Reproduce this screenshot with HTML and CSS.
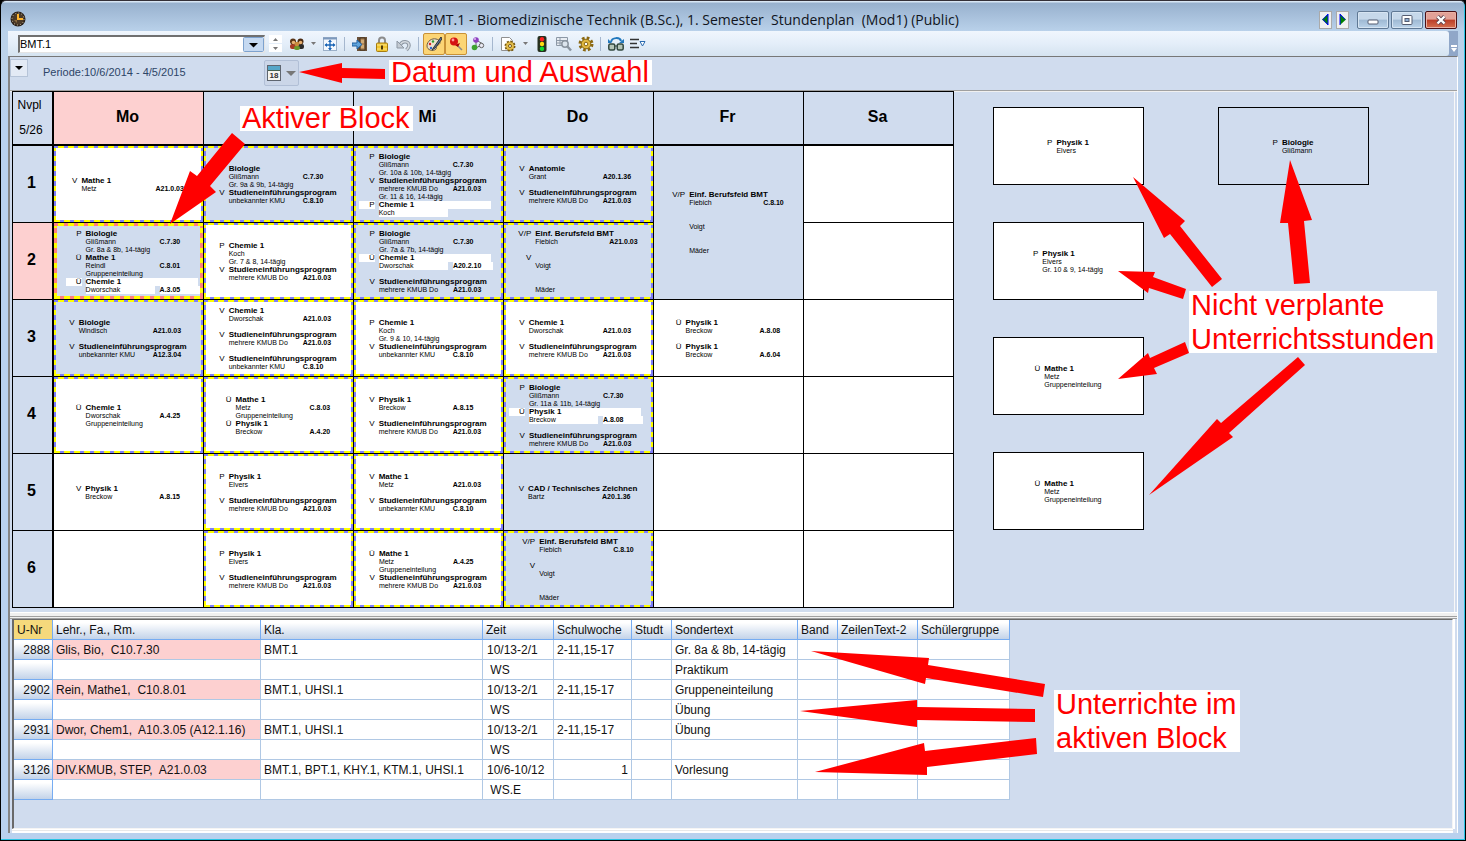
FILE: index.html
```html
<!DOCTYPE html>
<html lang="de">
<head>
<meta charset="utf-8">
<title>BMT.1 - Stundenplan</title>
<link rel="stylesheet" href="styles.css">
</head>
<body>
<div class="window">
  <header class="titlebar">
    <svg class="app-icon" viewBox="0 0 16 16" aria-hidden="true"><circle cx="8" cy="8" r="7.5" fill="#2b2119"/><circle cx="8" cy="8" r="6" fill="#4b3a28" stroke="#d8c8a8" stroke-dasharray="1 2.1"/><path d="M8 3v5h5" stroke="#ffb52e" stroke-width="2" fill="none"/><path d="M4 9h3v3z" fill="#8b6b3e"/></svg>
    <h1 class="title">BMT.1 - Biomedizinische Technik (B.Sc.), 1. Semester&nbsp; Stundenplan&nbsp; (Mod1) (Public)</h1>
    <div class="window-buttons">
      <button class="step" aria-label="Zurück"><svg viewBox="0 0 7 11"><path d="M6 0v11L0 5.500z" fill="#008000"/><path d="M6 0v11M6 0L1 5.500l5 5.500" stroke="#00f" fill="none"/></svg></button>
      <button class="step" aria-label="Vor"><svg viewBox="0 0 7 11"><path d="M1 0v11l6-5.500z" fill="#008000"/><path d="M1 11V0l5 5.500" stroke="#00f" fill="none"/></svg></button>
      <button class="caption first" aria-label="Minimieren"><svg viewBox="0 0 12 10"><rect x="1" y="5" width="10" height="4" rx="1" fill="#fff" stroke="#555c70"/></svg></button>
      <button class="caption" aria-label="Maximieren"><svg viewBox="0 0 12 10"><rect x="1" y=".5" width="10" height="9" rx="1" fill="#fff" stroke="#555c70"/><rect x="4" y="3.500" width="4" height="3" fill="#8fb0d6" stroke="#555c70"/></svg></button>
      <button class="caption close" aria-label="Schließen"><svg viewBox="0 0 12 10"><path d="M2.500 1.500l7 7M9.500 1.500l-7 7" stroke="#5b4450" stroke-width="4"/><path d="M2.500 1.500l7 7M9.500 1.500l-7 7" stroke="#fff" stroke-width="2.400"/></svg></button>
    </div>
  </header>

  <div class="toolbar">
    <div class="tools">
      <div class="combo">
        <select aria-label="Klasse"><option>BMT.1</option></select>
        <svg class="combo-arrow" viewBox="0 0 21 15" aria-hidden="true"><rect x=".5" y=".5" width="20" height="14" rx="1" fill="#c5d9f1" stroke="#7da2ce"/><path d="M6 6h9l-4.500 4.500z"/></svg>
      </div>
      <div class="spinner">
        <button aria-label="Vorherige"><svg viewBox="0 0 5 3"><path d="M0 3h5L2.500 0z" fill="#777"/></svg></button>
        <button aria-label="Nächste"><svg viewBox="0 0 5 3"><path d="M0 0h5L2.500 3z" fill="#777"/></svg></button>
      </div>
      <button class="tool people" aria-label="Klassen"><svg viewBox="0 0 16 16"><rect x="1" y="8" width="6" height="5" rx="2" fill="#a83a25"/><rect x="9" y="8" width="6" height="5" rx="2" fill="#2b2b2b"/><rect x="5" y="10" width="6" height="4" rx="2" fill="#6a9a2d"/><circle cx="4" cy="5.500" r="3" fill="#5a3516"/><circle cx="4.500" cy="6.500" r="1.800" fill="#e8b070"/><circle cx="11.500" cy="5.500" r="3" fill="#4a2a12"/><circle cx="11.500" cy="6.500" r="1.800" fill="#e8b070"/><circle cx="8" cy="8" r="2.300" fill="#c88a3c"/></svg></button>
      <button class="tool drop" aria-label="Mehr"><svg viewBox="0 0 5 3"><path d="M0 0h5L2.500 3z" fill="#777"/></svg></button>
      <button class="tool" aria-label="Anpassen"><svg viewBox="0 0 16 16"><rect x="1.500" y="1.500" width="13" height="13" fill="#f4f8fd" stroke="#9bb0c8"/><path d="M1 2.500h14" stroke="#7c99bd" stroke-width="2"/><path d="M8 4.500v9M3.500 9h9" stroke="#1763b5" stroke-width="1.300"/><path d="M8 3.500l2 2.500H6zM8 14.500L6 12h4zM2.500 9L5 7v4zM13.500 9L11 7v4z" fill="#1763b5"/></svg></button>
      <span class="sep"></span>
      <button class="tool" aria-label="Öffnen"><svg viewBox="0 0 16 16"><path d="M5 1h10v14H5z" fill="#6a5139"/><path d="M8 2h5v12H8z" fill="#b0895b" stroke="#44321f"/><path d="M9 4h3v3H9zM9 9h3v3H9z" fill="#d0ab78"/><path d="M0 7h5V4l5 4.500L5 13v-3H0z" fill="#5fa4dc" stroke="#1e5f9f"/></svg></button>
      <button class="tool" aria-label="Sperren"><svg viewBox="0 0 16 16"><path d="M5 8V4.500a3 3 0 0 1 6 0V8" fill="none" stroke="#8c8c8c" stroke-width="2"/><rect x="2.500" y="7" width="11" height="8.500" rx="1" fill="#f2c730" stroke="#a67c10"/><path d="M3 9h10M3 13h10" stroke="#fbe58b"/><path d="M8 9.500v4" stroke="#4d3a08" stroke-width="2"/></svg></button>
      <button class="tool" aria-label="Rückgängig"><svg viewBox="0 0 16 16"><path d="M4 9.500C6 4 13 5 13 9.500c0 2-1 3-2.500 4.500" fill="none" stroke="#8d97a3" stroke-width="3.600"/><path d="M4 9.500C6 4 13 5 13 9.500c0 2-1 3-2.500 4.500" fill="none" stroke="#d3d9df" stroke-width="1.600"/><path d="M1 5v7h7z" fill="#c4cbd3" stroke="#8d97a3"/></svg></button>
      <span class="sep"></span>
      <button class="tool active" aria-label="Farben"><svg viewBox="0 0 16 16"><path d="M1 10C1 5 6 2 10 3c5 1 5 5 2 6-2 1-1 2-2 4-3 3-9 1-9-3z" fill="#eee2cb" stroke="#6b5d45"/><circle cx="4" cy="8" r="1.200" fill="#d22"/><circle cx="7" cy="5.500" r="1.200" fill="#2b9a33"/><circle cx="5" cy="12" r="1.200" fill="#3366cc"/><path d="M15 1L8 11l-2 3 3-2 7-9z" fill="#5577a8" stroke="#333"/></svg></button>
      <button class="tool active" aria-label="Fixieren"><svg viewBox="0 0 16 16"><path d="M8 8l6 6" stroke="#888" stroke-width="1.500"/><path d="M7 9l3 2 2-4z" fill="#a00"/><circle cx="6" cy="5.500" r="4" fill="#d51212"/><circle cx="5" cy="4" r="1.400" fill="#ff9c9c"/></svg></button>
      <button class="tool" aria-label="Kopplung"><svg viewBox="0 0 16 16"><path d="M6 4v8M6 12l7-4M6 4l7 4" stroke="#666"/><circle cx="6" cy="4" r="2.800" fill="#8d3fc0"/><circle cx="5" cy="3" r="1" fill="#e0bdf2"/><circle cx="4.500" cy="11.500" r="2.800" fill="#3fa331"/><circle cx="11.500" cy="9.500" r="2.200" fill="#e9e9f4" stroke="#666"/></svg></button>
      <span class="sep"></span>
      <button class="tool" aria-label="Einstellungen"><svg viewBox="0 0 16 16"><path d="M1.500 1.500h8l3 3v10h-11z" fill="#fff" stroke="#909090"/><circle cx="10" cy="10" r="4.500" fill="#c99a22" stroke="#76580e" stroke-width="2" stroke-dasharray="2 1.500"/><circle cx="10" cy="10" r="3.800" fill="#e3bd4b"/><circle cx="10" cy="10" r="1.500" fill="#fff" stroke="#76580e"/></svg></button>
      <button class="tool drop" aria-label="Mehr"><svg viewBox="0 0 5 3"><path d="M0 0h5L2.500 3z" fill="#777"/></svg></button>
      <button class="tool" aria-label="Ampel"><svg viewBox="0 0 16 16"><rect x="3.500" y="0" width="9" height="16" rx="2" fill="#26301f"/><circle cx="8" cy="3.300" r="2.200" fill="#f22"/><circle cx="8" cy="8" r="2.200" fill="#fd1"/><circle cx="8" cy="12.700" r="2.200" fill="#1d3"/></svg></button>
      <button class="tool" aria-label="Suchen"><svg viewBox="0 0 16 16"><path d="M.5 1.500h11v8H.5zM.5 4.500h11M.5 7h11M4 2v7" fill="#e8edf3" stroke="#8c98a6"/><circle cx="9" cy="8" r="3.200" fill="#dce5ee" stroke="#8a949f" stroke-width="1.500"/><path d="M11 10l4 4.500" stroke="#8a949f" stroke-width="2.500"/></svg></button>
      <button class="tool" aria-label="Optionen"><svg viewBox="0 0 16 16"><circle cx="8" cy="8" r="6" fill="none" stroke="#8b6811" stroke-width="3" stroke-dasharray="2.600 2.110"/><circle cx="8" cy="8" r="4.800" fill="#e2b941" stroke="#8b6811"/><circle cx="8" cy="8" r="1.800" fill="#fff" stroke="#8b6811"/></svg></button>
      <span class="sep"></span>
      <button class="tool" aria-label="Vergleichen"><svg viewBox="0 0 16 16"><rect x=".8" y="8" width="6" height="6" rx="1.500" fill="#b5c5b8" stroke="#32483f" stroke-width="1.500"/><rect x="9.200" y="8" width="6" height="6" rx="1.500" fill="#b5c5b8" stroke="#32483f" stroke-width="1.500"/><path d="M6 10h4" stroke="#32483f"/><path d="M3 6c1-5 9-5 10-1" fill="none" stroke="#2178bd" stroke-width="2"/><path d="M0 3v4h4zM16 3v4h-5z" fill="#2178bd"/></svg></button>
      <button class="tool" aria-label="Liste"><svg viewBox="0 0 16 16"><path d="M0 3.500h9M0 7.500h7M0 11.500h9" stroke="#333" stroke-width="1.500"/><path d="M10 5.500h5L12.500 10z" fill="#fff" stroke="#2a6bb0"/></svg></button>
    </div>
    <button class="overflow" aria-label="Weitere Symbole"><svg viewBox="0 0 6 7"><path d="M0 1h6" stroke="#fff" stroke-width="2"/><path d="M0 3h6L3 7z" fill="#fff"/></svg></button>
  </div>

  <main class="content">
    <div class="period">
      <button class="expand" aria-label="Aufklappen"><svg viewBox="0 0 8 4"><path d="M0 0h8L4 4z"/></svg></button>
      <span class="period-text">Periode:10/6/2014 - 4/5/2015</span>
      <button class="date" aria-label="Datum"><svg class="calendar" viewBox="0 0 14 16"><rect x=".5" y=".5" width="13" height="15" fill="#f5f5f0" stroke="#5f6670"/><path d="M1 1h12v4H1z" fill="#56a6c8"/><path d="M1 5.500h12" stroke="#46604f"/><text x="7" y="13" text-anchor="middle" font-size="8" font-weight="bold" fill="#333">18</text></svg><svg class="date-arrow" viewBox="0 0 10 5"><path d="M0 0h10L5 5z" fill="#777"/></svg></button>
    </div>

    <section class="plan">
      <table class="timetable">
        <colgroup><col class="hours"><col span="6" class="day"></colgroup>
        <thead>
          <tr><th class="corner"><span>Nvpl</span><span>5/26</span></th><th class="current">Mo</th><th aria-label="Dienstag"></th><th>Mi</th><th>Do</th><th>Fr</th><th>Sa</th></tr>
        </thead>
        <tbody>
          <tr>
            <th>1</th>
            <td><div class="cell marked"><div class="block"><span class="type">V</span><b class="subject">Mathe 1</b><span class="teacher">Metz</span><b class="room">A21.0.03</b></div></div></td>
            <td><div class="cell marked blue"><div class="block"><span class="type">P</span><b class="subject">Biologie</b><span class="teacher">Glißmann</span><b class="room">C.7.30</b><span class="note">Gr. 9a &amp; 9b, 14-tägig</span><span class="type">V</span><b class="subject">Studieneinführungsprogram</b><span class="teacher">unbekannter KMU</span><b class="room">C.8.10</b></div></div></td>
            <td><div class="cell marked blue"><div class="block"><span class="type">P</span><b class="subject">Biologie</b><span class="teacher">Glißmann</span><b class="room">C.7.30</b><span class="note">Gr. 10a &amp; 10b, 14-tägig</span><span class="type">V</span><b class="subject">Studieneinführungsprogram</b><span class="teacher">mehrere KMUB Do</span><b class="room">A21.0.03</b><span class="note">Gr. 11 &amp; 16, 14-tägig</span><span class="type hl">P</span><b class="subject hl">Chemie 1</b><span class="teacher hl">Koch</span></div></div></td>
            <td><div class="cell marked blue"><div class="block"><span class="type">V</span><b class="subject">Anatomie</b><span class="teacher">Grant</span><b class="room">A20.1.36</b><span class="blank"></span><span class="type">V</span><b class="subject">Studieneinführungsprogram</b><span class="teacher">mehrere KMUB Do</span><b class="room">A21.0.03</b></div></div></td>
            <td rowspan="2"><div class="cell blue"><div class="block"><span class="type">V/P</span><b class="subject">Einf. Berufsfeld BMT</b><span class="teacher">Fiebich</span><b class="room">C.8.10</b><span class="blank"></span><span class="blank"></span><span class="teacher">Voigt</span><span class="blank"></span><span class="blank"></span><span class="teacher">Mäder</span></div></div></td>
            <td></td>
          </tr>
          <tr>
            <th class="current">2</th>
            <td><div class="cell marked selected blue"><div class="block"><span class="type">P</span><b class="subject">Biologie</b><span class="teacher">Glißmann</span><b class="room">C.7.30</b><span class="note">Gr. 8a &amp; 8b, 14-tägig</span><span class="type">Ü</span><b class="subject">Mathe 1</b><span class="teacher">Reindl</span><b class="room">C.8.01</b><span class="note">Gruppeneinteilung</span><span class="type hl">Ü</span><b class="subject hl">Chemie 1</b><span class="teacher hl">Dworschak</span><b class="room hl">A.3.05</b></div></div></td>
            <td><div class="cell marked"><div class="block"><span class="type">P</span><b class="subject">Chemie 1</b><span class="teacher">Koch</span><span class="note">Gr. 7 &amp; 8, 14-tägig</span><span class="type">V</span><b class="subject">Studieneinführungsprogram</b><span class="teacher">mehrere KMUB Do</span><b class="room">A21.0.03</b></div></div></td>
            <td><div class="cell marked blue"><div class="block"><span class="type">P</span><b class="subject">Biologie</b><span class="teacher">Glißmann</span><b class="room">C.7.30</b><span class="note">Gr. 7a &amp; 7b, 14-tägig</span><span class="type hl">Ü</span><b class="subject hl">Chemie 1</b><span class="teacher hl">Dworschak</span><b class="room hl">A20.2.10</b><span class="blank"></span><span class="type">V</span><b class="subject">Studieneinführungsprogram</b><span class="teacher">mehrere KMUB Do</span><b class="room">A21.0.03</b></div></div></td>
            <td><div class="cell marked blue"><div class="block"><span class="type">V/P</span><b class="subject">Einf. Berufsfeld BMT</b><span class="teacher">Fiebich</span><b class="room">A21.0.03</b><span class="blank"></span><span class="type">V</span><b class="subject"></b><span class="teacher">Voigt</span><span class="blank"></span><span class="blank"></span><span class="teacher">Mäder</span></div></div></td>
            <td></td>
          </tr>
          <tr>
            <th>3</th>
            <td><div class="cell marked blue"><div class="block"><span class="type">V</span><b class="subject">Biologie</b><span class="teacher">Windisch</span><b class="room">A21.0.03</b><span class="blank"></span><span class="type">V</span><b class="subject">Studieneinführungsprogram</b><span class="teacher">unbekannter KMU</span><b class="room">A12.3.04</b></div></div></td>
            <td><div class="cell marked"><div class="block"><span class="type">V</span><b class="subject">Chemie 1</b><span class="teacher">Dworschak</span><b class="room">A21.0.03</b><span class="blank"></span><span class="type">V</span><b class="subject">Studieneinführungsprogram</b><span class="teacher">mehrere KMUB Do</span><b class="room">A21.0.03</b><span class="blank"></span><span class="type">V</span><b class="subject">Studieneinführungsprogram</b><span class="teacher">unbekannter KMU</span><b class="room">C.8.10</b></div></div></td>
            <td><div class="cell marked"><div class="block"><span class="type">P</span><b class="subject">Chemie 1</b><span class="teacher">Koch</span><span class="note">Gr. 9 &amp; 10, 14-tägig</span><span class="type">V</span><b class="subject">Studieneinführungsprogram</b><span class="teacher">unbekannter KMU</span><b class="room">C.8.10</b></div></div></td>
            <td><div class="cell marked"><div class="block"><span class="type">V</span><b class="subject">Chemie 1</b><span class="teacher">Dworschak</span><b class="room">A21.0.03</b><span class="blank"></span><span class="type">V</span><b class="subject">Studieneinführungsprogram</b><span class="teacher">mehrere KMUB Do</span><b class="room">A21.0.03</b></div></div></td>
            <td><div class="cell"><div class="block"><span class="type">Ü</span><b class="subject">Physik 1</b><span class="teacher">Breckow</span><b class="room">A.8.08</b><span class="blank"></span><span class="type">Ü</span><b class="subject">Physik 1</b><span class="teacher">Breckow</span><b class="room">A.6.04</b></div></div></td>
            <td></td>
          </tr>
          <tr>
            <th>4</th>
            <td><div class="cell marked"><div class="block"><span class="type">Ü</span><b class="subject">Chemie 1</b><span class="teacher">Dworschak</span><b class="room">A.4.25</b><span class="note">Gruppeneinteilung</span></div></div></td>
            <td><div class="cell marked"><div class="block"><span class="type">Ü</span><b class="subject">Mathe 1</b><span class="teacher">Metz</span><b class="room">C.8.03</b><span class="note">Gruppeneinteilung</span><span class="type">Ü</span><b class="subject">Physik 1</b><span class="teacher">Breckow</span><b class="room">A.4.20</b></div></div></td>
            <td><div class="cell marked"><div class="block"><span class="type">V</span><b class="subject">Physik 1</b><span class="teacher">Breckow</span><b class="room">A.8.15</b><span class="blank"></span><span class="type">V</span><b class="subject">Studieneinführungsprogram</b><span class="teacher">mehrere KMUB Do</span><b class="room">A21.0.03</b></div></div></td>
            <td><div class="cell marked blue"><div class="block"><span class="type">P</span><b class="subject">Biologie</b><span class="teacher">Glißmann</span><b class="room">C.7.30</b><span class="note">Gr. 11a &amp; 11b, 14-tägig</span><span class="type hl">Ü</span><b class="subject hl">Physik 1</b><span class="teacher hl">Breckow</span><b class="room hl">A.8.08</b><span class="blank"></span><span class="type">V</span><b class="subject">Studieneinführungsprogram</b><span class="teacher">mehrere KMUB Do</span><b class="room">A21.0.03</b></div></div></td>
            <td></td>
            <td></td>
          </tr>
          <tr>
            <th>5</th>
            <td><div class="cell"><div class="block"><span class="type">V</span><b class="subject">Physik 1</b><span class="teacher">Breckow</span><b class="room">A.8.15</b></div></div></td>
            <td><div class="cell marked"><div class="block"><span class="type">P</span><b class="subject">Physik 1</b><span class="teacher">Elvers</span><span class="blank"></span><span class="type">V</span><b class="subject">Studieneinführungsprogram</b><span class="teacher">mehrere KMUB Do</span><b class="room">A21.0.03</b></div></div></td>
            <td><div class="cell marked"><div class="block"><span class="type">V</span><b class="subject">Mathe 1</b><span class="teacher">Metz</span><b class="room">A21.0.03</b><span class="blank"></span><span class="type">V</span><b class="subject">Studieneinführungsprogram</b><span class="teacher">unbekannter KMU</span><b class="room">C.8.10</b></div></div></td>
            <td><div class="cell blue"><div class="block"><span class="type">V</span><b class="subject">CAD / Technisches Zeichnen</b><span class="teacher">Bartz</span><b class="room">A20.1.36</b></div></div></td>
            <td></td>
            <td></td>
          </tr>
          <tr>
            <th>6</th>
            <td></td>
            <td><div class="cell marked"><div class="block"><span class="type">P</span><b class="subject">Physik 1</b><span class="teacher">Elvers</span><span class="blank"></span><span class="type">V</span><b class="subject">Studieneinführungsprogram</b><span class="teacher">mehrere KMUB Do</span><b class="room">A21.0.03</b></div></div></td>
            <td><div class="cell marked"><div class="block"><span class="type">Ü</span><b class="subject">Mathe 1</b><span class="teacher">Metz</span><b class="room">A.4.25</b><span class="note">Gruppeneinteilung</span><span class="type">V</span><b class="subject">Studieneinführungsprogram</b><span class="teacher">mehrere KMUB Do</span><b class="room">A21.0.03</b></div></div></td>
            <td><div class="cell marked blue"><div class="block"><span class="type">V/P</span><b class="subject">Einf. Berufsfeld BMT</b><span class="teacher">Fiebich</span><b class="room">C.8.10</b><span class="blank"></span><span class="type">V</span><b class="subject"></b><span class="teacher">Voigt</span><span class="blank"></span><span class="blank"></span><span class="teacher">Mäder</span></div></div></td>
            <td></td>
            <td></td>
          </tr>
        </tbody>
      </table>

      <div class="unplanned">
        <div class="card"><div class="block plain"><span class="type">P</span><b class="subject">Physik 1</b><span class="teacher">Elvers</span></div></div>
        <div class="card blue"><div class="block plain"><span class="type">P</span><b class="subject">Biologie</b><span class="teacher">Glißmann</span></div></div>
        <div class="card left"><div class="block plain"><span class="type">P</span><b class="subject">Physik 1</b><span class="teacher">Elvers</span><span class="note">Gr. 10 &amp; 9, 14-tägig</span></div></div>
        <div class="card left"><div class="block plain"><span class="type">Ü</span><b class="subject">Mathe 1</b><span class="teacher">Metz</span><span class="note">Gruppeneinteilung</span></div></div>
        <div class="card left"><div class="block plain"><span class="type">Ü</span><b class="subject">Mathe 1</b><span class="teacher">Metz</span><span class="note">Gruppeneinteilung</span></div></div>
      </div>
    </section>

    <div class="splitter"></div>

    <section class="details">
      <table class="lessons">
        <colgroup><col class="c-nr"><col class="c-teacher"><col class="c-class"><col class="c-time"><col class="c-week"><col class="c-stud"><col class="c-text"><col class="c-band"><col class="c-line"><col class="c-group"></colgroup>
        <thead><tr><th class="sorted">U-Nr</th><th>Lehr., Fa., Rm.</th><th>Kla.</th><th>Zeit</th><th>Schulwoche</th><th>Studt</th><th>Sondertext</th><th>Band</th><th>ZeilenText-2</th><th>Schülergruppe</th></tr></thead>
        <tbody>
          <tr><th>2888</th><td class="pink">Glis, Bio,&nbsp; C10.7.30</td><td>BMT.1</td><td>10/13-2/1</td><td>2-11,15-17</td><td></td><td>Gr. 8a &amp; 8b, 14-tägig</td><td></td><td></td><td></td></tr>
          <tr><th></th><td></td><td></td><td>&nbsp;WS</td><td></td><td></td><td>Praktikum</td><td></td><td></td><td></td></tr>
          <tr><th>2902</th><td class="pink">Rein, Mathe1,&nbsp; C10.8.01</td><td>BMT.1, UHSI.1</td><td>10/13-2/1</td><td>2-11,15-17</td><td></td><td>Gruppeneinteilung</td><td></td><td></td><td></td></tr>
          <tr><th></th><td></td><td></td><td>&nbsp;WS</td><td></td><td></td><td>Übung</td><td></td><td></td><td></td></tr>
          <tr><th>2931</th><td class="pink">Dwor, Chem1,&nbsp; A10.3.05 (A12.1.16)</td><td>BMT.1, UHSI.1</td><td>10/13-2/1</td><td>2-11,15-17</td><td></td><td>Übung</td><td></td><td></td><td></td></tr>
          <tr><th></th><td></td><td></td><td>&nbsp;WS</td><td></td><td></td><td></td><td></td><td></td><td></td></tr>
          <tr><th>3126</th><td class="pink">DIV.KMUB, STEP,&nbsp; A21.0.03</td><td>BMT.1, BPT.1, KHY.1, KTM.1, UHSI.1</td><td>10/6-10/12</td><td class="num">1</td><td></td><td>Vorlesung</td><td></td><td></td><td></td></tr>
          <tr><th></th><td></td><td></td><td>&nbsp;WS.E</td><td></td><td></td><td></td><td></td><td></td><td></td></tr>
        </tbody>
      </table>
    </section>
  </main>

  <div class="callouts">
    <svg class="arrows" width="1466" height="841" viewBox="0 0 1466 841" aria-hidden="true">
      <path d="M299 72L342 63V68L385 69V79L342 78V83z"/>
      <path d="M170 224L190 171L197 176L232 133L245 144L210 186L216 192z"/>
      <path d="M1133 177L1185 221L1180 226L1222 279L1212 287L1170 234L1164 238z"/>
      <path d="M1290 160L1312 220L1304 221L1310 283L1294 284L1288 223L1280 223z"/>
      <path d="M1118 271L1155 272L1153 277L1186 289L1183 299L1149 288L1148 293z"/>
      <path d="M1118 379L1148 353L1150 358L1185 342L1189 353L1154 368L1157 374z"/>
      <path d="M1149 495L1217 419L1221 423L1298 357L1305 365L1229 433L1233 437z"/>
      <path d="M811 651L929 658L928 665L1045 684L1043 697L926 678L925 684z"/>
      <path d="M800 711L917 700V707L1035 709V722L917 720V727z"/>
      <path d="M815 772L924 743L925 751L1036 738L1037 754L927 767L927 775z"/>
    </svg>
    <div class="callout date-callout"><span>Datum und Auswahl</span></div>
    <div class="callout block-callout"><span>Aktiver Block</span></div>
    <div class="callout unplanned-callout"><span>Nicht verplante</span><span>Unterrichtsstunden</span></div>
    <div class="callout lessons-callout"><span>Unterrichte im</span><span>aktiven Block</span></div>
  </div>
</div>
</body>
</html>
```
FILE: styles.css
```css
* { box-sizing: border-box; }
body { margin: 0; background: #000; font-family: "Liberation Sans", Arial, sans-serif; }
button { padding: 0; border: 0; background: none; display: flex; align-items: center; justify-content: center; }

.window {
  position: relative;
  min-height: 100vh;
  display: flex;
  flex-direction: column;
  padding: 0 7px 7px 7px;
  border: 1px solid #000;
  border-top-color: #343038;
  border-radius: 6px 6px 0 0;
  background: linear-gradient(#d8e6f4 0 1px, #98b1ce 2px, #b9d1ea 30px, #bdd3ea 60px, #b9d1ee 120px);
  box-shadow: inset -1px -1px #2ac4e4;
}

/* title bar */
.titlebar { display: flex; align-items: center; height: 30px; }
.app-icon { width: 16px; height: 16px; margin: 6px 0 0 2px; }
.title { flex: 1; margin: 7px 0 0; padding-left: 38px; text-align: center; font: 14px/20px "Open Sans", "Noto Sans", sans-serif; color: #10141c; white-space: nowrap; }
.window-buttons { display: flex; align-items: center; padding: 7px 1px 0 0; }
.step { width: 13px; height: 18px; margin-right: 4px; border: 1px solid #aaa; background: #f0f0f0; }
.step svg { width: 7px; height: 11px; }
.caption { width: 32px; height: 18px; margin-left: 2px; border: 1px solid #5f7894; border-radius: 2px; background: linear-gradient(#c6d8ea 45%, #9fb9d3 50%, #bbd3ea); box-shadow: inset 0 0 0 1px #d6e4f2; }
.caption.first { margin-left: 4px; }
.caption svg { width: 12px; height: 10px; }
.close { border-color: #4c1016; background: linear-gradient(#e2a197 45%, #bb3d27 50%, #d5704f); box-shadow: inset 0 0 0 1px #e9b0a4; }

/* tool bar */
.toolbar { display: flex; height: 25px; background: #90a7c8; }
.tools { flex: 1; display: flex; align-items: center; padding-left: 10px; border-radius: 0 3px 3px 0; background: linear-gradient(#f0f6fd, #e4eef9 50%, #d5e3f0); }
.overflow { width: 9px; align-items: flex-end; padding-bottom: 4px; }
.overflow svg { width: 6px; height: 7px; }
.combo { position: relative; width: 247px; height: 18px; border: 1px solid #e4e4e4; border-top: 2px solid #707070; border-left: 2px solid #707070; background: #fff; }
.combo select { display: block; width: 100%; height: 15px; padding: 0; border: 0; appearance: none; background: #fff; font: 11px/14px "Liberation Sans", Arial, sans-serif; color: #000; }
.combo-arrow { position: absolute; top: 0; right: 0; width: 21px; height: 15px; pointer-events: none; }
.spinner { display: flex; flex-direction: column; gap: 1px; margin: 0 5px 0 4px; }
.spinner button { width: 13px; height: 8px; background: #fff; }
.spinner svg, .drop svg { width: 5px; height: 3px; }
.tool { width: 22px; height: 22px; }
.tool svg { width: 16px; height: 16px; }
.people { width: 20px; }
.tool.drop { width: 12px; }
.tool.drop svg { width: 5px; height: 3px; }
.tool.active { border: 1px solid #c99238; border-radius: 2px; background: #fcd575; }
.sep { width: 1px; height: 14px; margin: 0 4px 0 3px; background: #a5b7ce; }

/* panels */
.content { flex: 1; display: flex; flex-direction: column; border-top: 1px solid #777; border-left: 2px solid #858585; border-right: 1px solid #fff; background: #d0dcee; }
.period { display: flex; align-items: flex-start; height: 34px; border-bottom: 1px solid #a0a0a0; box-shadow: 0 1px #f0f0f0; }
.expand { width: 18px; height: 18px; margin-top: 2px; border: 1px solid #b6c4d8; background: #e3eaf5; }
.expand svg { width: 8px; height: 4px; }
.period-text { width: 231px; padding-left: 15px; font-size: 11px; line-height: 30px; color: #2d4567; }
.date { width: 35px; height: 26px; margin: 3px 0 0 5px; gap: 5px; border: 1px solid #b1bfd6; border-radius: 2px; background: #cbd6e8; }
.calendar { width: 14px; height: 16px; }
.date-arrow { width: 10px; height: 5px; }

.plan { display: flex; align-items: flex-start; margin-right: 2px; padding: 0 0 4px 2px; border-right: 1px solid #f8f8f8; }
.timetable { flex: none; table-layout: fixed; width: 942px; border-spacing: 0; border: solid #000; border-width: 1px 0 0 1px; background: #fff; }
.hours { width: 41px; }
.day { width: 150px; }
.timetable th, .timetable td { padding: 0; border: solid #000; border-width: 0 1px 1px 0; }
.timetable th { padding: 0 2px 2px 0; background: #d0dcee; font-size: 16px; }
.timetable thead th { height: 54px; border-bottom-width: 2px; padding-bottom: 3px; }
.timetable tr > th:first-child { border-right-width: 2px; }
.timetable tbody td { height: 77px; }
.timetable th.current { background: #fdd0d0; }
.timetable th.corner { font-size: 12px; font-weight: normal; line-height: 25px; padding: 0; }
.corner span { display: block; }
.corner span:first-child { padding-right: 6px; }
.corner span:last-child { padding-right: 3px; }

.cell { height: 76px; display: flex; align-items: center; justify-content: center; overflow: hidden; --fill: #fff; --a: #ff0; --b: #7f7ff8; --w: 2px; background: var(--fill); }
.cell.blue, .card.blue { --fill: #d0dcee; }
td[rowspan] .cell { height: 153px; }
.marked {
  background:
    repeating-linear-gradient(90deg, var(--b) 0 4px, var(--a) 4px 10px) top / 100% var(--w) no-repeat,
    repeating-linear-gradient(90deg, var(--a) 0 6px, var(--b) 6px 10px) bottom / 100% var(--w) no-repeat,
    repeating-linear-gradient(var(--a) 0 5px, var(--b) 5px 10px) left / var(--w) 100% no-repeat,
    repeating-linear-gradient(var(--b) 0 5px, var(--a) 5px 10px) right / var(--w) 100% no-repeat,
    var(--fill);
}
.selected { --b: #ff8080; --w: 3px; }

/* lesson block: type | teacher | room, titles span the last two */
.block { display: grid; grid-template-columns: auto 74px auto; grid-auto-rows: 8px; padding: 1px 1px 0 0; font-size: 7px; line-height: 8px; color: #000; white-space: nowrap; }
.block.plain { grid-template-columns: auto auto auto; }
.type { grid-column: 1; justify-self: end; margin-right: 4px; font-size: 8px; }
.subject { grid-column: 2 / 4; font-size: 8px; }
.teacher { grid-column: 2; }
.room { grid-column: 3; }
.note { grid-column: 2 / 4; }
.blank { grid-column: 1 / 4; }
.hl { background: #fff; }
.type.hl { margin-left: -10px; padding-left: 10px; }
.subject.hl { justify-self: start; width: 112px; margin-right: -40px; }
.teacher.hl { width: 69px; }
.room.hl { width: 40px; margin-right: -40px; }

.unplanned { display: grid; grid-template-columns: 151px 151px; grid-auto-rows: 78px; gap: 37px 74px; padding: 16px 0 0 39px; }
.card { --fill: #fff; display: flex; align-items: center; justify-content: center; border: 1px solid #000; background: var(--fill); }
.card.left { grid-column: 1; }

.splitter { height: 7px; border-top: 1px solid #fff; border-bottom: 1px solid #a0a0a0; background: linear-gradient(#f0f0f0 0 3px, #a0a0a0 3px 4px, #f0f0f0 4px); }
.details { flex: 1; margin: 0 4px 4px 2px; border: 1px solid #696969; border-width: 1px 1px 1px 2px; border-right-color: #f4f4f4; border-bottom-color: #f4f4f4; box-shadow: 0 1px #fff, 0 2px #e8e8e8, 0 4px #fff, 2px 0 #fff; }

.lessons { table-layout: fixed; width: 996px; border-spacing: 0; font-size: 12px; line-height: 18px; background: #fff; color: #111; }
.lessons th, .lessons td { height: 20px; padding: 1px 0 0 3px; border: solid #b0c8e4; border-width: 0 1px 1px 0; text-align: left; font-weight: normal; white-space: nowrap; }
.lessons th { border-color: #76acf2; background: linear-gradient(#fff, #fff 15%, #c3d3e9); }
.lessons tbody th { text-align: right; padding: 1px 2px 0 0; }
.lessons th.sorted { background: #f5d97c; }
.lessons td.pink { background: #fdd0d0; }
.lessons td:nth-child(4) { padding-left: 4px; }
.lessons td.num { text-align: right; padding-right: 3px; }
.c-nr { width: 39px; }
.c-teacher { width: 208px; }
.c-class { width: 222px; }
.c-time { width: 71px; }
.c-week { width: 78px; }
.c-stud { width: 40px; }
.c-text { width: 126px; }
.c-band { width: 40px; }
.c-line { width: 80px; }
.c-group { width: 92px; }

/* annotations lying over the window */
.callouts { position: absolute; top: -1px; left: -1px; pointer-events: none; }
.arrows { display: block; fill: #f00; }
.callout { position: absolute; display: flex; flex-direction: column; gap: 6px; padding: 0 3px 0 2px; background: #fff; color: #f00; font-size: 29px; line-height: 28px; white-space: nowrap; }
.date-callout { left: 389px; top: 60px; line-height: 25px; }
.block-callout { left: 240px; top: 106px; line-height: 25px; }
.unplanned-callout { left: 1189px; top: 291px; }
.lessons-callout { left: 1054px; top: 690px; }
```
